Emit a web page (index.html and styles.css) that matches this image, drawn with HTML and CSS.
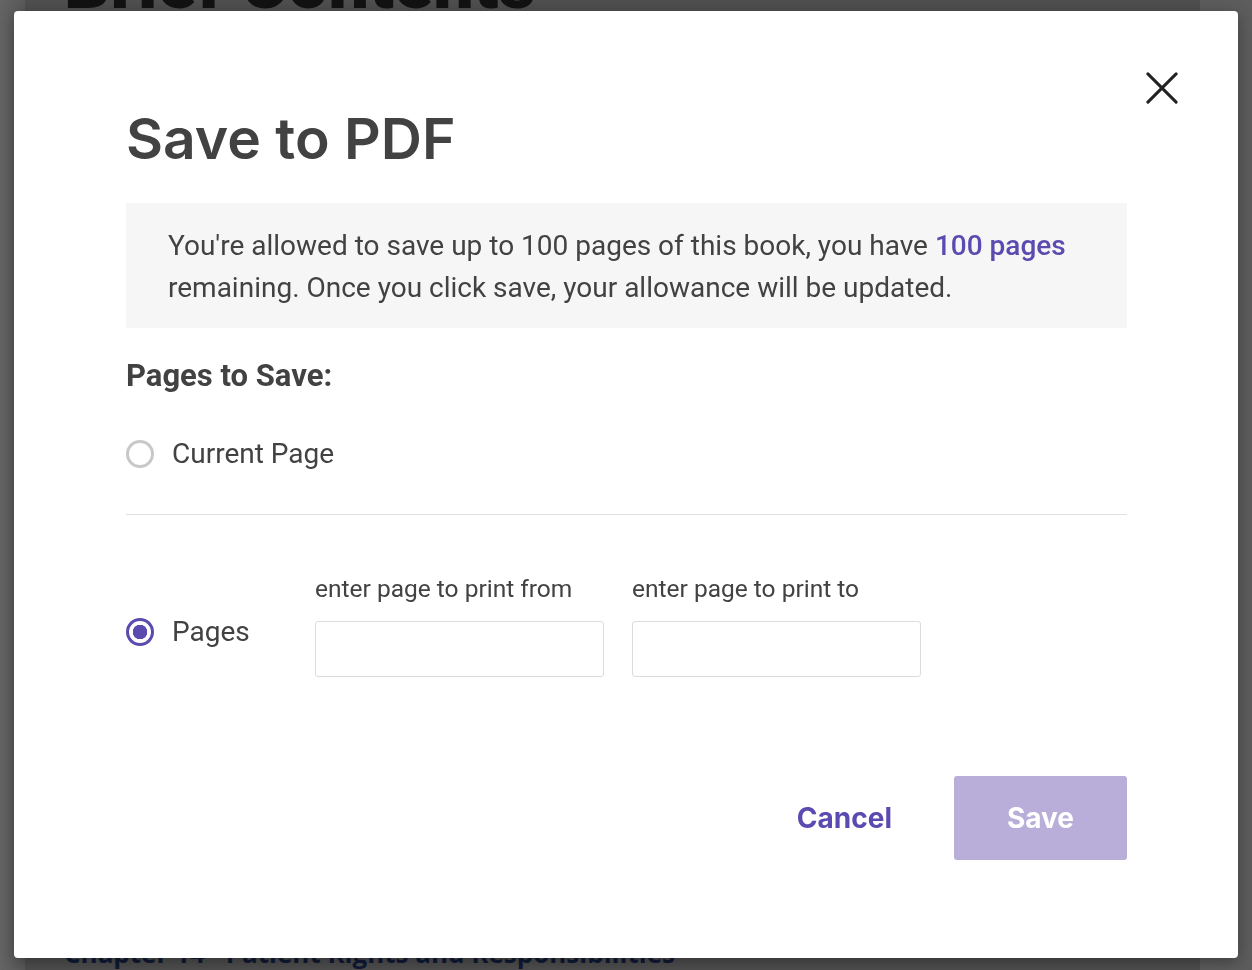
FILE: index.html
```html
<!DOCTYPE html>
<html lang="en">
<head>
<meta charset="utf-8">
<title>Save to PDF</title>
<link rel="stylesheet" href="styles.css">
</head>
<body>
<div class="page">
  <div class="page-inner">
    <h1 class="page-title">Brief Contents</h1>
    <a class="page-link">Chapter 14 · Patient Rights and Responsibilities</a>
  </div>
</div>

<div class="modal" role="dialog" aria-labelledby="dlg-title">
  <button class="close" aria-label="Close">
    <svg width="34" height="34" viewBox="0 0 34 34"><path d="M2 2 L32 32 M32 2 L2 32" stroke="#222" stroke-width="3.2" stroke-linecap="round" fill="none"/></svg>
  </button>
  <h2 class="title" id="dlg-title">Save to PDF</h2>
  <p class="notice">You're allowed to save up to 100 pages of this book, you have <span class="accent">100 pages</span> remaining. Once you click save, your allowance will be updated.</p>
  <h3 class="section">Pages to Save:</h3>
  <div class="option option-current">
    <span class="radio"></span>
    <span class="opt-label">Current Page</span>
  </div>
  <hr class="divider">
  <div class="option option-range">
    <span class="radio radio-on"></span>
    <span class="opt-label opt-pages">Pages</span>
    <div class="fields">
      <label class="field">
        <span class="field-label">enter page to print from</span>
        <input class="field-input" type="text">
      </label>
      <label class="field">
        <span class="field-label">enter page to print to</span>
        <input class="field-input" type="text">
      </label>
    </div>
  </div>
  <div class="actions">
    <button class="btn-cancel">Cancel</button>
    <button class="btn-save">Save</button>
  </div>
</div>
</body>
</html>
```
FILE: styles.css
```css
html, body {
  margin: 0;
  padding: 0;
  height: 100%;
  overflow: hidden;
}
body {
  background: #5d5d5d;
  font-family: Roboto, "Liberation Sans", sans-serif;
}
.page {
  height: 970px;
  padding: 0 52px 0 25px;
  background: linear-gradient(to right, #646464 0, #5a5a5a 25px, transparent 25px);
}
.page-inner {
  height: 970px;
  background: #4f4f4f;
  padding: 0 0 0 39px;
  display: flex;
  flex-direction: column;
  justify-content: space-between;
  box-sizing: border-box;
}
.page-title {
  margin: -52px 0 0 0;
  font-family: Roboto, sans-serif;
  font-weight: 900;
  font-size: 72px;
  line-height: 72px;
  color: #121212;
}
.page-link {
  font-family: "Open Sans", sans-serif;
  font-weight: 700;
  font-size: 26px;
  line-height: 26px;
  color: #0f1a36;
  margin-bottom: 4px;
}

.modal {
  position: fixed;
  left: 14px;
  top: 11px;
  width: 1224px;
  height: 947px;
  box-sizing: border-box;
  background: #fff;
  border-radius: 4px;
  box-shadow: 0 4px 16px rgba(0,0,0,0.35);
  padding: 96px 111px 0 112px;
  color: #424242;
}
.close {
  position: absolute;
  top: 60px;
  right: 59px;
  width: 34px;
  height: 34px;
  padding: 0;
  border: 0;
  background: none;
  display: flex;
  align-items: center;
  justify-content: center;
}
.close svg {
  width: 32px;
  height: 32px;
}
.title {
  margin: 0;
  font-family: Inter, sans-serif;
  font-weight: 600;
  font-size: 57px;
  line-height: 64px;
  color: #424242;
}
.notice {
  margin: 32px 0 0 0;
  background: #f6f6f6;
  padding: 22px 40px 19px 42px;
  font-size: 28px;
  line-height: 42px;
  color: #424242;
}
.accent {
  color: #5b4bb0;
  font-weight: 500;
}
.section {
  margin: 28px 0 0 0;
  font-size: 31px;
  line-height: 40px;
  font-weight: 700;
  color: #424242;
}
.option {
  display: flex;
  align-items: center;
}
.option-current {
  margin-top: 38px;
  height: 40px;
}
.radio {
  width: 22px;
  height: 22px;
  border: 3px solid #c8c8c8;
  border-radius: 50%;
  flex: none;
  background: #fff;
}
.radio-on {
  border-color: #5b4bb0;
  background: radial-gradient(circle, #5b4bb0 0 7px, #fff 7.5px);
}
.opt-label {
  margin-left: 18px;
  font-size: 28px;
  line-height: 40px;
  color: #424242;
}
.divider {
  margin: 40px 0 0 0;
  border: 0;
  border-top: 1px solid #e0e0e0;
  height: 0;
}
.option-range {
  margin-top: 59px;
  align-items: flex-end;
}
.option-range .radio {
  margin-bottom: 31px;
}
.opt-pages {
  width: 143px;
  margin-bottom: 25px;
}
.fields {
  display: flex;
  gap: 28px;
}
.field {
  display: flex;
  flex-direction: column;
  width: 289px;
}
.field-label {
  font-size: 24.5px;
  line-height: 30px;
  color: #424242;
  white-space: nowrap;
}
.field-input {
  margin-top: 17px;
  height: 56px;
  box-sizing: border-box;
  border: 1px solid #dcdcdc;
  border-radius: 3px;
  background: #fff;
  font: inherit;
}
.actions {
  margin-top: 99px;
  display: flex;
  justify-content: flex-end;
  align-items: center;
  gap: 62px;
}
.btn-cancel {
  border: 0;
  background: none;
  padding: 0;
  font-family: Inter, sans-serif;
  font-weight: 700;
  font-size: 28px;
  color: #5b4bb0;
}
.btn-save {
  width: 173px;
  height: 84px;
  border: 0;
  border-radius: 3px;
  background: #b8aed9;
  color: #fff;
  font-family: Inter, sans-serif;
  font-weight: 700;
  font-size: 28px;
}
```
